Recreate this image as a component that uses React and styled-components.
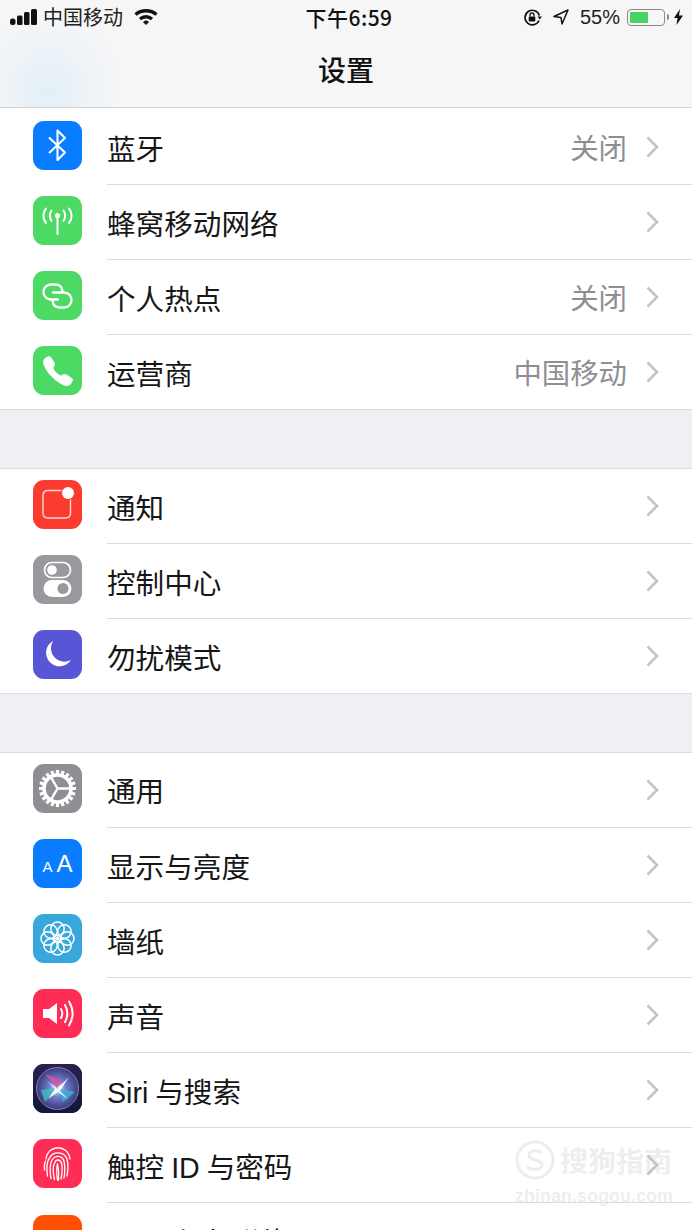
import React from 'react'
import styled, { createGlobalStyle } from 'styled-components'
import { IoCall } from 'react-icons/io5'

const GlobalStyle = createGlobalStyle`
  html, body {
    margin: 0;
    padding: 0;
    background: #efeff4;
  }
  body {
    font-family: "Liberation Sans", "Noto Sans CJK SC", sans-serif;
  }
`

const Screen = styled.div`
  position: relative;
  width: 692px;
  height: 1230px;
  overflow: hidden;
  background: #efeff4;
`

const Header = styled.header`
  height: 107px;
  border-bottom: 1px solid #d4d4d6;
  background:
    radial-gradient(ellipse 75px 80px at 48px 90px, #e3eff7 0%, rgba(240, 244, 247, 0) 100%),
    #f6f6f7;
`

const StatusBar = styled.div`
  height: 34px;
  display: grid;
  grid-template-columns: 1fr auto 1fr;
  align-items: center;
  padding: 0 9px 0 10px;
  color: #111;
`

const StatusLeft = styled.div`
  display: flex;
  align-items: center;
`

const StatusRight = styled.div`
  display: flex;
  align-items: center;
  justify-content: flex-end;
`

const Carrier = styled.span`
  font-family: "Noto Sans CJK SC", sans-serif;
  font-size: 20px;
  line-height: 24px;
  margin: 0 11px 0 6px;
  color: #222;
`

const Time = styled.span`
  font-family: "Noto Sans CJK SC", sans-serif;
  font-size: 21px;
  font-weight: 500;
  line-height: 24px;
  letter-spacing: 0.5px;
  margin-left: 5px;
`

const Percent = styled.span`
  font-size: 20px;
  line-height: 24px;
  margin: 0 7px 0 11px;
  color: #222;
`

const Battery = styled.div`
  position: relative;
  box-sizing: border-box;
  width: 38px;
  height: 17px;
  padding: 2px;
  border: 1.5px solid #8b8b8b;
  border-radius: 4px;
  margin-right: 9px;

  &::after {
    content: '';
    position: absolute;
    right: -4.5px;
    top: 4px;
    width: 2px;
    height: 6px;
    background: #8b8b8b;
    border-radius: 0 2px 2px 0;
  }
`

const BatteryLevel = styled.div`
  height: 100%;
  background: #47d464;
  border-radius: 1px;
`

const Title = styled.h1`
  margin: 0;
  height: 73px;
  line-height: 70px;
  text-align: center;
  font-family: "Noto Sans CJK SC", sans-serif;
  font-size: 28px;
  font-weight: 500;
  color: #111;
`

const Section = styled.section`
  background: #fff;
  border-top: ${(p) => (p.$first ? 'none' : '1px solid #dcdce0')};
  padding-top: ${(p) => (p.$first ? '2px' : '0')};
  border-bottom: 1px solid #dcdce0;
  margin-bottom: 57.75px;
`

const Row = styled.div`
  display: flex;
  align-items: flex-start;
  height: 75.1px;
  padding-left: 33px;
  box-sizing: border-box;

  &:last-child {
    height: 74px;
  }
`

const Tile = styled.div`
  flex: none;
  width: 49px;
  height: 49px;
  margin-top: 11px;
  border-radius: 11px;
  overflow: hidden;
  display: flex;
  align-items: center;
  justify-content: center;
  color: #fff;
  background: ${(p) => p.$bg};
`

const RowBody = styled.div`
  flex: 1;
  height: 75px;
  margin-left: 25px;
  padding: 0 33px 0 0;
  box-sizing: border-box;
  display: flex;
  align-items: center;
  border-bottom: 1px solid ${(p) => (p.$last ? 'transparent' : '#dcdce0')};
`

const Label = styled.span`
  flex: 1;
  padding-top: 5px;
  font-family: "Liberation Sans", "Noto Sans CJK SC", sans-serif;
  font-size: 28.6px;
  line-height: 40px;
  word-spacing: -1px;
  color: #161616;
  white-space: nowrap;
`

const Value = styled.span`
  font-family: "Noto Sans CJK SC", sans-serif;
  font-size: 28.4px;
  line-height: 40px;
  color: #8e8e93;
  margin-right: 19px;
`

const BigA = styled.span`
  font-size: 24px;
  line-height: 1;
`

const SmallA = styled.span`
  font-size: 15px;
  line-height: 1;
  margin: 5px 4px 0 0;
`

const Mark = styled.div`
  position: absolute;
  left: 515px;
  top: 1140px;
  width: 165px;
  color: rgba(195, 195, 195, 0.3);
`

const MarkTop = styled.div`
  display: flex;
  align-items: center;
`

const MarkName = styled.span`
  font-family: "Noto Sans CJK SC", sans-serif;
  font-size: 28px;
  font-weight: 700;
  line-height: 40px;
  margin-left: 5px;
  white-space: nowrap;
`

const MarkUrl = styled.div`
  font-size: 18px;
  line-height: 20px;
  margin-top: 6px;
  font-weight: 700;
`

const Signal = () => (
  <svg width="27" height="16" viewBox="0 0 27 16" fill="#111">
    <rect x="0" y="9.5" width="5.5" height="6.5" rx="2.5" />
    <rect x="7" y="6.5" width="5.5" height="9.5" rx="1.5" />
    <rect x="14" y="3" width="5.5" height="13" rx="1.5" />
    <rect x="21" y="0" width="6" height="16" rx="1.5" />
  </svg>
)

const Wifi = () => (
  <svg width="24" height="16" viewBox="0 0 24 16" fill="none" stroke="#111" strokeWidth="3.4">
    <path d="M1.5 5.5 C7.5 .5 16.5 .5 22.5 5.5" />
    <path d="M6 10 C9.5 7 14.5 7 18 10" />
    <path d="M9.5 13 L12 15.5 L14.5 13 C13 11.6 11 11.6 9.5 13 Z" fill="#111" strokeWidth="1" />
  </svg>
)

const RotationLock = () => (
  <svg width="20" height="17" viewBox="0 0 20 17" fill="none" stroke="#111" strokeWidth="1.7" style={{ marginRight: 10 }}>
    <path d="M16 11.5 A7.3 7.3 0 1 1 16.3 6.5" />
    <path d="M14.5 7.5 H19 L16.8 10.5 Z" fill="#111" stroke="none" />
    <rect x="5.7" y="7.5" width="6.6" height="5" rx="1" fill="#111" stroke="none" />
    <path d="M7 7.5 V6 A2 2 0 0 1 11 6 V7.5" strokeWidth="1.3" />
  </svg>
)

const Arrow = () => (
  <svg width="16" height="16" viewBox="0 0 16 16" fill="none" stroke="#111" strokeWidth="1.5" strokeLinejoin="round">
    <path d="M15 1 L1 7.5 L8 8.5 L9 15 Z" />
  </svg>
)

const Bolt = () => (
  <svg width="9" height="16" viewBox="0 0 9 16" fill="#111">
    <path d="M6 0 L0 9 H3.5 L2.5 16 L9 6.5 H5 Z" />
  </svg>
)

const Chevron = () => (
  <svg width="13" height="22" viewBox="0 0 13 22" fill="none" stroke="#c4c4c8" strokeWidth="2.6">
    <path d="M1.5 1.5 L11 11 L1.5 20.5" />
  </svg>
)

const Glyph = ({ children, ...rest }) => (
  <svg width="49" height="49" viewBox="0 0 49 49" fill="none" stroke="#fff" strokeWidth="2" strokeLinecap="round" strokeLinejoin="round" {...rest}>
    {children}
  </svg>
)

const BluetoothIcon = () => (
  <Glyph strokeWidth="2.1" strokeLinecap="butt">
    <path d="M16 16.5 L32 31.5 L24.5 39 V9.5 L32 17 L16 32" />
  </Glyph>
)

const CellularIcon = () => (
  <Glyph strokeWidth="2">
    <circle cx="24.5" cy="19.5" r="2.6" fill="#fff" stroke="none" />
    <path d="M24.5 20 V38" />
    <path d="M18.5 14.5 C16.3 17.5 16.3 22 18.5 25" />
    <path d="M30.5 14.5 C32.7 17.5 32.7 22 30.5 25" />
    <path d="M13 12.5 C9.5 16.5 9.5 23 13 27" />
    <path d="M36 12.5 C39.5 16.5 39.5 23 36 27" />
  </Glyph>
)

const HotspotIcon = () => (
  <Glyph strokeWidth="2.3">
    <path d="M29.5 20 C29 16 26 13.5 22 13.5 H18 C13.5 13.5 10.5 17 10.5 21 C10.5 25.5 14 28.5 18 28.5 H25" />
    <path d="M20 21.5 H31 C35.5 21.5 38.5 25 38.5 29 C38.5 33 35.5 36.5 31 36.5 H27 C23 36.5 20 34 19.5 30" />
  </Glyph>
)

const NotifyIcon = () => (
  <Glyph strokeWidth="1.4" stroke="#ffd9d6">
    <path d="M28 10.5 H15 C12 10.5 10 12.5 10 15.5 V33 C10 36 12 38 15 38 H32.5 C35.5 38 37.5 36 37.5 33 V20" />
    <circle cx="35" cy="13" r="6" fill="#fff" stroke="none" />
  </Glyph>
)

const ControlIcon = () => (
  <Glyph strokeWidth="1.7">
    <rect x="11.5" y="7.5" width="26" height="15" rx="7.5" />
    <circle cx="19" cy="15" r="4.8" fill="#fff" stroke="none" />
    <rect x="10.5" y="25" width="28" height="17" rx="8.5" fill="#fff" stroke="none" />
    <circle cx="30" cy="33.5" r="5.5" fill="#98989d" stroke="none" />
  </Glyph>
)

const MoonIcon = () => (
  <Glyph stroke="none" fill="#fff">
    <path d="M20 11 A13.5 13.5 0 1 0 38 30 A13.5 13.5 0 0 1 20 11 Z" />
  </Glyph>
)

const GearIcon = () => {
  const teeth = Array.from({ length: 20 }, (_, i) => i * 18)
  return (
    <Glyph strokeLinecap="butt">
      <circle cx="24.5" cy="24.5" r="13.5" strokeWidth="3.6" />
      {teeth.map((a) => (
        <path key={a} d="M24.5 6 V11" strokeWidth="3.2" transform={`rotate(${a} 24.5 24.5)`} />
      ))}
      <path d="M24.5 24.5 L37 24.5 M24.5 24.5 L18.2 13.6 M24.5 24.5 L18.2 35.4" strokeWidth="2.4" />
    </Glyph>
  )
}

const FlowerIcon = () => {
  const petals = Array.from({ length: 8 }, (_, i) => i * 45)
  return (
    <Glyph strokeWidth="1.5">
      {petals.map((a) => (
        <circle key={a} cx="24.5" cy="14.7" r="6.7" transform={`rotate(${a} 24.5 24.5)`} />
      ))}
      <circle cx="24.5" cy="24.5" r="2.3" fill="#fff" stroke="none" />
    </Glyph>
  )
}

const SoundIcon = () => (
  <Glyph strokeWidth="2">
    <path d="M10 20 H16 L24 14 V35 L16 29 H10 Z" fill="#fff" stroke="none" />
    <path d="M28 20 C29.7 23 29.7 26 28 29" />
    <path d="M32 16 C35 21.5 35 27.5 32 33" />
    <path d="M36 12.5 C40.5 20 40.5 29 36 36.5" />
  </Glyph>
)

const SiriIcon = () => (
  <svg width="49" height="49" viewBox="0 0 49 49">
    <defs>
      <radialGradient id="siriDisc" cx="50%" cy="50%" r="50%">
        <stop offset="0%" stopColor="#e8f4ff" />
        <stop offset="40%" stopColor="#6f7fd0" />
        <stop offset="100%" stopColor="#3b3a78" />
      </radialGradient>
      <linearGradient id="siriBack" x1="0" y1="0" x2="0" y2="1">
        <stop offset="0%" stopColor="#2a2050" />
        <stop offset="100%" stopColor="#10183a" />
      </linearGradient>
    </defs>
    <rect width="49" height="49" fill="url(#siriBack)" />
    <circle cx="24.5" cy="24.5" r="21" fill="url(#siriDisc)" stroke="#8c7fb8" strokeWidth="1" />
    <path d="M24 24 L12 10 L30 16 Z" fill="#d04fa0" opacity=".85" />
    <path d="M24 24 L42 28 L30 38 Z" fill="#3fb0d8" opacity=".8" />
    <path d="M24 24 L12 38 L8 26 Z" fill="#38c8c0" opacity=".75" />
    <path d="M24 25 L36 13 L27 27 L35 35 L25 28 L15 35 L22 25 L14 17 Z" fill="#fff" opacity=".9" />
  </svg>
)

const FingerprintIcon = () => (
  <Glyph strokeWidth="1.3">
    <path d="M13 20 C15 5 35 5 37 20" />
    <path d="M11.5 31 C11 26 11.5 24 12.5 22" />
    <path d="M14.5 37 C13.5 30 14 22 16.5 19 C20 12 31 12 34 20 C35 24 35 32 34 37" />
    <path d="M18 39.5 C16.5 32 17 24 19 21 C22 16 29 16 31 22 C32 27 32 33 31 39" />
    <path d="M21.5 40.5 C20 34 20 27 21.5 24 C23 20 27 20 28.5 24 C29.5 28 29 35 28 40" />
    <path d="M24.5 41 C23.5 35 23.5 29 24.5 25 C25.5 29 26 35 25.5 41" />
  </Glyph>
)

const rowGroups = [
  [
    { label: '蓝牙', value: '关闭', bg: '#0a7cff', icon: <BluetoothIcon /> },
    { label: '蜂窝移动网络', bg: '#4cd964', icon: <CellularIcon /> },
    { label: '个人热点', value: '关闭', bg: '#4cd964', icon: <HotspotIcon /> },
    { label: '运营商', value: '中国移动', bg: '#4cd964', icon: <IoCall size={34} /> },
  ],
  [
    { label: '通知', bg: '#fb3a30', icon: <NotifyIcon /> },
    { label: '控制中心', bg: '#98989d', icon: <ControlIcon /> },
    { label: '勿扰模式', bg: '#5856d6', icon: <MoonIcon /> },
  ],
  [
    { label: '通用', bg: '#8e8e93', icon: <GearIcon /> },
    {
      label: '显示与亮度',
      bg: '#0a7cff',
      icon: (
        <>
          <SmallA>A</SmallA>
          <BigA>A</BigA>
        </>
      ),
    },
    { label: '墙纸', bg: '#38a8dc', icon: <FlowerIcon /> },
    { label: '声音', bg: '#ff2d55', icon: <SoundIcon /> },
    { label: 'Siri 与搜索', bg: '#1a1a3a', icon: <SiriIcon /> },
    { label: '触控 ID 与密码', bg: '#ff2d55', icon: <FingerprintIcon /> },
    { label: 'SOS 紧急联络', bg: '#ff4f00', icon: null },
  ],
]

export default function App() {
  return (
    <Screen>
      <GlobalStyle />
      <Header>
        <StatusBar>
          <StatusLeft>
            <Signal />
            <Carrier>中国移动</Carrier>
            <Wifi />
          </StatusLeft>
          <Time>下午6:59</Time>
          <StatusRight>
            <RotationLock />
            <Arrow />
            <Percent>55%</Percent>
            <Battery>
              <BatteryLevel style={{ width: '55%' }} />
            </Battery>
            <Bolt />
          </StatusRight>
        </StatusBar>
        <Title>设置</Title>
      </Header>
      {rowGroups.map((rows, g) => (
        <Section key={g} $first={g === 0}>
          {rows.map((row, i) => (
            <Row key={row.label}>
              <Tile $bg={row.bg}>{row.icon}</Tile>
              <RowBody $last={i === rows.length - 1}>
                <Label>{row.label}</Label>
                {row.value && <Value>{row.value}</Value>}
                <Chevron />
              </RowBody>
            </Row>
          ))}
        </Section>
      ))}
      <Mark>
        <MarkTop>
          <svg width="40" height="40" viewBox="0 0 40 40" fill="none" stroke="currentColor" strokeWidth="3">
            <circle cx="20" cy="20" r="18" />
            <path d="M27 13 C22 9 13 11 14 16 C15 21 27 19 27 25 C27 30 17 31 12 27" />
          </svg>
          <MarkName>搜狗指南</MarkName>
        </MarkTop>
        <MarkUrl>zhinan.sogou.com</MarkUrl>
      </Mark>
    </Screen>
  )
}
